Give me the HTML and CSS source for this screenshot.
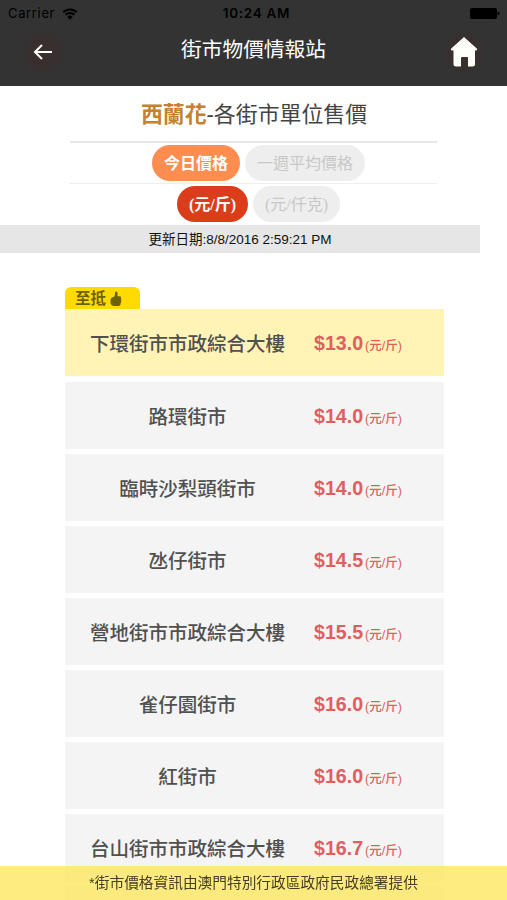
FILE: index.html
```html
<!DOCTYPE html>
<html lang="zh-Hant">
<head>
<meta charset="utf-8">
<title>街市物價情報站</title>
<link rel="stylesheet" href="styles.css">
</head>
<body>

<div class="header">
  <div class="status">
    <div class="carrier">Carrier
      <svg class="wifi" width="16" height="12" viewBox="0 0 16 12">
        <path d="M1.2 4.2a9.6 9.6 0 0 1 13.6 0M3.6 6.8a6.2 6.2 0 0 1 8.8 0" fill="none" stroke="#000" stroke-width="2"/>
        <path d="M8 11.6L5.3 8.9a3.8 3.8 0 0 1 5.4 0z"/>
      </svg>
    </div>
    <div class="time">10:24 AM</div>
    <div class="battery">
      <svg width="30" height="12" viewBox="0 0 30 12">
        <rect x="0" y="0" width="27" height="11" rx="2"/>
        <path d="M27.7 3.5q1.8.4 1.8 2t-1.8 2z"/>
      </svg>
    </div>
  </div>
  <div class="navbar">
    <a href="#" class="navbtn">
      <svg width="20" height="18" viewBox="0 0 20 18">
        <path d="M9 2L2 9l7 7M2.300 9H19" fill="none" stroke="#fff" stroke-width="2"/>
      </svg>
    </a>
    <h1>街市物價情報站</h1>
    <a href="#" class="navbtn home">
      <svg width="28" height="32" viewBox="0 0 28 32">
        <path d="M14 1L27 12.800q.8 1.700-1 1.700h-1V28q0 2.500-2.500 2.500h-4.500V22q0-1-1-1h-5q-1 0-1 1v8.500H6Q3.500 30.500 3.500 28V14.500H2q-1.800 0-1-1.700z" fill="#fffffa"/>
      </svg>
    </a>
  </div>
</div>

<h2><b>西蘭花</b>-各街市單位售價</h2>

<div class="tabs tabs-type">
  <a href="#" class="pill orange">今日價格</a>
  <a href="#" class="pill">一週平均價格</a>
</div>
<div class="tabs tabs-unit">
  <a href="#" class="pill red">(元/斤)</a>
  <a href="#" class="pill">(元/仟克)</a>
</div>

<div class="update">更新日期:8/8/2016 2:59:21 PM</div>

<div class="list">
  <div class="best">至抵
    <svg width="12" height="16" viewBox="0 0 12 16">
      <path d="M3.800 6C5 4.500 5 3 5.100 1.200c.1-1.200 2.300-1 2.500.9.200 1.300 0 2.300-.2 3.200h2.200c1.400 0 1.900 1.500 1.200 2.200.9.700.8 1.800.1 2.300.6.800.4 1.800-.3 2.200.3 1.800-.7 3-2.100 3H4.500C2 15 .5 13.500.5 12V9c0-1.500 1.800-3 3.300-3z" fill="#6d6200"/>
    </svg>
  </div>
  <div class="row lowest"><div class="name">下環街市市政綜合大樓</div><div class="price">$13.0<span>(元/斤)</span></div></div>
  <div class="row"><div class="name">路環街市</div><div class="price">$14.0<span>(元/斤)</span></div></div>
  <div class="row"><div class="name">臨時沙梨頭街市</div><div class="price">$14.0<span>(元/斤)</span></div></div>
  <div class="row"><div class="name">氹仔街市</div><div class="price">$14.5<span>(元/斤)</span></div></div>
  <div class="row"><div class="name">營地街市市政綜合大樓</div><div class="price">$15.5<span>(元/斤)</span></div></div>
  <div class="row"><div class="name">雀仔園街市</div><div class="price">$16.0<span>(元/斤)</span></div></div>
  <div class="row"><div class="name">紅街市</div><div class="price">$16.0<span>(元/斤)</span></div></div>
  <div class="row"><div class="name">台山街市市政綜合大樓</div><div class="price">$16.7<span>(元/斤)</span></div></div>
  <div class="row"></div>
</div>

<div class="footer">*街市價格資訊由澳門特別行政區政府民政總署提供</div>

</body>
</html>
```
FILE: styles.css
```css
* {
  box-sizing: border-box;
}

body {
  margin: 0;
  height: 900px;
  overflow: hidden;
  background-color: #fff;
  color: #444;
  font-family: "Liberation Sans", "Noto Sans CJK TC", sans-serif;
}

a {
  text-decoration: none;
}

.header {
  height: 86px;
  background-color: #333;
}

.status {
  display: grid;
  grid-template-columns: 1fr auto 1fr;
  height: 27px;
  padding: 0 7px 0 8px;
  align-items: center;
  color: #000;
  font-family: Inter, sans-serif;
  font-size: 13px;
  line-height: 27px;
}

.carrier {
  display: flex;
  gap: 7px;
  align-items: center;
  letter-spacing: 0.65px;
}

.time {
  padding-left: 5px;
  font-size: 13.5px;
  font-weight: 600;
  letter-spacing: 0.7px;
}

.battery {
  display: flex;
  justify-content: flex-end;
}

.navbar {
  display: flex;
  height: 50px;
  padding: 0 20px;
  justify-content: space-between;
  align-items: center;
}

.navbtn {
  display: flex;
  width: 46px;
  height: 46px;
  justify-content: center;
  align-items: center;
  border-radius: 50%;
  background: radial-gradient(#392f2d 35%, #333 72%);
}

h1 {
  margin: 0 0 5px;
  color: #fff;
  font-size: 20.7px;
  font-weight: normal;
  line-height: 30px;
}

h2 {
  width: 367px;
  height: 57px;
  margin: 0 0 0 70px;
  padding-left: 1px;
  border-bottom: 2px solid #e6e6e6;
  color: #444;
  font-size: 21.9px;
  font-weight: normal;
  line-height: 58px;
  text-align: center;
  white-space: nowrap;
}

h2 b {
  color: #c48231;
  font-weight: bold;
}

.tabs {
  display: flex;
  width: 367px;
  margin-left: 70px;
  gap: 5px;
  justify-content: center;
}

.tabs-type {
  height: 41px;
  padding: 2px 0 0 10px;
  border-bottom: 1px solid #eee;
}

.tabs-unit {
  height: 41px;
  padding: 2px 0 0 10px;
}

.pill {
  height: 36px;
  padding: 0 12px;
  border-radius: 18px;
  background-color: #eee;
  color: #c8c8c8;
  font-family: "Liberation Serif", "Noto Sans CJK TC", serif;
  font-size: 16px;
  line-height: 37px;
}

.orange {
  background-color: #ff8d50;
  color: #fff;
  font-weight: bold;
}

.red {
  background-color: #db3d1b;
  color: #fff;
  font-weight: bold;
}

.update {
  width: 480px;
  height: 28px;
  background-color: #e6e6e6;
  color: #111;
  font-size: 13.5px;
  line-height: 29px;
  text-align: center;
}

.list {
  width: 379px;
  height: 613px;
  margin: 34px 0 0 65px;
  overflow: hidden;
}

.best {
  display: flex;
  width: 75px;
  height: 22px;
  padding: 2px 0 0 10px;
  gap: 4px;
  align-items: center;
  border-radius: 6px 6px 0 0;
  background-color: #ffdb00;
  color: #6d6200;
  font-size: 15.5px;
  font-weight: bold;
  line-height: 22px;
}

.row {
  display: flex;
  height: 67px;
  margin-bottom: 5px;
  align-items: center;
  background-color: #f4f4f4;
}

.lowest {
  margin-bottom: 6px;
  background-color: #fff4b6;
}

.name {
  width: 245px;
  color: #505050;
  font-size: 19.5px;
  font-weight: 500;
  text-align: center;
}

.price {
  padding: 2px 0 0 4px;
  color: #e05e5e;
  font-size: 19.6px;
  font-weight: bold;
}

.price span {
  margin-left: 2px;
  font-size: 12.5px;
  font-weight: 500;
}

.lowest .name,
.lowest .price {
  margin-top: -1px;
}

.footer {
  position: fixed;
  left: 0;
  right: 0;
  bottom: 0;
  height: 34px;
  background-color: rgba(255, 230, 90, 0.76);
  color: #443f20;
  font-size: 14.7px;
  line-height: 34px;
  text-align: center;
}
```
